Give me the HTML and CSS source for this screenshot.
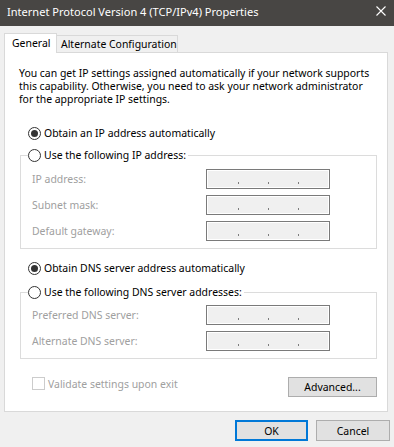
FILE: index.html
```html
<!DOCTYPE html>
<html lang="en">
<head>
    <meta charset="UTF-8">
    <meta name="viewport" content="width=device-width, initial-scale=1.0">
    <title>Internet Protocol Version 4 (TCP/IPv4) Properties</title>
    <link rel="stylesheet" href="styles.css">
</head>
<body>
<div class="window">
    <div class="title-bar">
        <span class="title-text">Internet Protocol Version 4 (TCP/IPv4) Properties</span>
        <svg class="close-icon" width="10" height="10" viewBox="0 0 10 10">
            <path d="M0.5 0.5 L9.5 9.5 M9.5 0.5 L0.5 9.5" stroke="#ffffff" stroke-width="1.1" fill="none"/>
        </svg>
    </div>

    <div class="dialog">
        <div class="tabs">
            <div class="tab active">General</div>
            <div class="tab">Alternate Configuration</div>
        </div>

        <div class="panel">
            <p class="intro">You can get IP settings assigned automatically if your network supports<br>this capability. Otherwise, you need to ask your network administrator<br>for the appropriate IP settings.</p>

            <div class="radio-row auto-ip"><span class="radio checked"></span>Obtain an IP address automatically</div>

            <fieldset class="group ip-group">
                <legend><span class="radio-row"><span class="radio"></span>Use the following IP address:</span></legend>
                <div class="field-row">
                    <span class="field-label">IP address:</span>
                    <span class="ip-box"><i></i><i></i><i></i></span>
                </div>
                <div class="field-row">
                    <span class="field-label">Subnet mask:</span>
                    <span class="ip-box"><i></i><i></i><i></i></span>
                </div>
                <div class="field-row">
                    <span class="field-label">Default gateway:</span>
                    <span class="ip-box"><i></i><i></i><i></i></span>
                </div>
            </fieldset>

            <div class="radio-row auto-dns"><span class="radio checked"></span>Obtain DNS server address automatically</div>

            <fieldset class="group dns-group">
                <legend><span class="radio-row"><span class="radio"></span>Use the following DNS server addresses:</span></legend>
                <div class="field-row">
                    <span class="field-label">Preferred DNS server:</span>
                    <span class="ip-box"><i></i><i></i><i></i></span>
                </div>
                <div class="field-row">
                    <span class="field-label">Alternate DNS server:</span>
                    <span class="ip-box"><i></i><i></i><i></i></span>
                </div>
            </fieldset>

            <div class="bottom-row">
                <span class="check-row"><span class="checkbox"></span>Validate settings upon exit</span>
                <button class="btn advanced">Advanced...</button>
            </div>
        </div>

        <div class="footer">
            <button class="btn ok">OK</button>
            <button class="btn cancel">Cancel</button>
        </div>
    </div>
</div>
</body>
</html>
```

FILE: styles.css
```css
body {
    margin: 0;
    font-family: "Noto Sans", sans-serif;
    font-size: 10.45px;
    color: #000;
    background: #f0f0f0;
}

.window {
    width: 394px;
    height: 447px;
    background: #f0f0f0;
    overflow: hidden;
}

.title-bar {
    height: 26px;
    background: #484644;
    color: #fff;
    display: flex;
    justify-content: space-between;
    padding: 0 8px 0 7px;
    box-sizing: border-box;
}

.title-text {
    line-height: 24px;
    font-size: 11.05px;
}

.close-icon {
    margin-top: 6px;
}

.dialog {
    padding: 7px 4px 0 4px;
}

.tabs {
    display: flex;
    align-items: flex-start;
    height: 20px;
    margin-bottom: -1px;
    position: relative;
    z-index: 1;
}

.tab {
    box-sizing: border-box;
    border: 1px solid #d9d9d9;
    border-bottom: none;
    background: #f0f0f0;
    white-space: nowrap;
}

.tab.active {
    width: 53px;
    height: 20px;
    background: #fff;
    padding-left: 7px;
    line-height: 18px;
}

.tab:not(.active) {
    width: 122px;
    height: 17px;
    margin-top: 2px;
    margin-left: -1px;
    padding-left: 4px;
    line-height: 17px;
}

.panel {
    width: 384px;
    height: 360px;
    box-sizing: border-box;
    background: #fff;
    border: 1px solid #d9d9d9;
    padding: 0 0 0 15px;
}

.intro {
    margin: 14px 0 0 -1px;
    line-height: 13px;
    white-space: nowrap;
}

.radio-row {
    display: flex;
    align-items: center;
    height: 15px;
    line-height: 15px;
    white-space: nowrap;
}

.radio {
    width: 13px;
    height: 13px;
    box-sizing: border-box;
    border: 1px solid #333;
    border-radius: 50%;
    background: #fff;
    margin-right: 3px;
    position: relative;
}

.radio.checked::after {
    content: "";
    position: absolute;
    left: 2px;
    top: 2px;
    width: 7px;
    height: 7px;
    border-radius: 50%;
    background: #333;
}

.auto-ip {
    margin: 20px 0 0 8px;
}

.auto-dns {
    margin: 12px 0 0 8px;
}

.group {
    width: 357px;
    box-sizing: border-box;
    margin: 7px 0 0 0;
    padding: 6px 0 7px 11px;
    border: 1px solid #dcdcdc;
}

.dns-group {
    margin-top: 9px;
    padding-top: 5px;
}

.group legend {
    padding: 0 2px 0 0;
    margin-left: -4px;
}

.field-row {
    display: flex;
    align-items: center;
    height: 20px;
    margin-top: 6px;
}

.field-row:first-of-type {
    margin-top: 0;
}

.field-label {
    width: 174px;
    color: #a0a0a0;
}

.ip-box {
    width: 124px;
    height: 20px;
    box-sizing: border-box;
    border: 1px solid #7a7a7a;
    box-shadow: inset 0 0 0 1px #fff;
    background: #f0f0f0;
    display: flex;
    justify-content: center;
    align-items: flex-end;
    gap: 29px;
    padding-bottom: 4px;
}

.ip-box i {
    display: block;
    width: 1px;
    height: 2px;
    background: #7d7d7d;
}

.bottom-row {
    width: 357px;
    display: flex;
    justify-content: space-between;
    align-items: flex-start;
    margin-top: 18px;
}

.check-row {
    display: flex;
    align-items: center;
    margin-left: 12px;
    height: 13px;
    color: #a0a0a0;
}

.checkbox {
    width: 13px;
    height: 13px;
    box-sizing: border-box;
    border: 1px solid #cccccc;
    background: #fff;
    margin-right: 3px;
}

.btn {
    font-family: inherit;
    font-size: inherit;
    color: #000;
    background: #e1e1e1;
    border: 1px solid #adadad;
    padding: 0;
    margin: 0;
    box-sizing: border-box;
}

.advanced {
    width: 89px;
    height: 20px;
}

.footer {
    display: flex;
    justify-content: flex-end;
    gap: 8px;
    margin-top: 8px;
}

.ok {
    width: 73px;
    height: 21px;
    border: 2px solid #0078d7;
}

.cancel {
    width: 74px;
    height: 21px;
}
```
